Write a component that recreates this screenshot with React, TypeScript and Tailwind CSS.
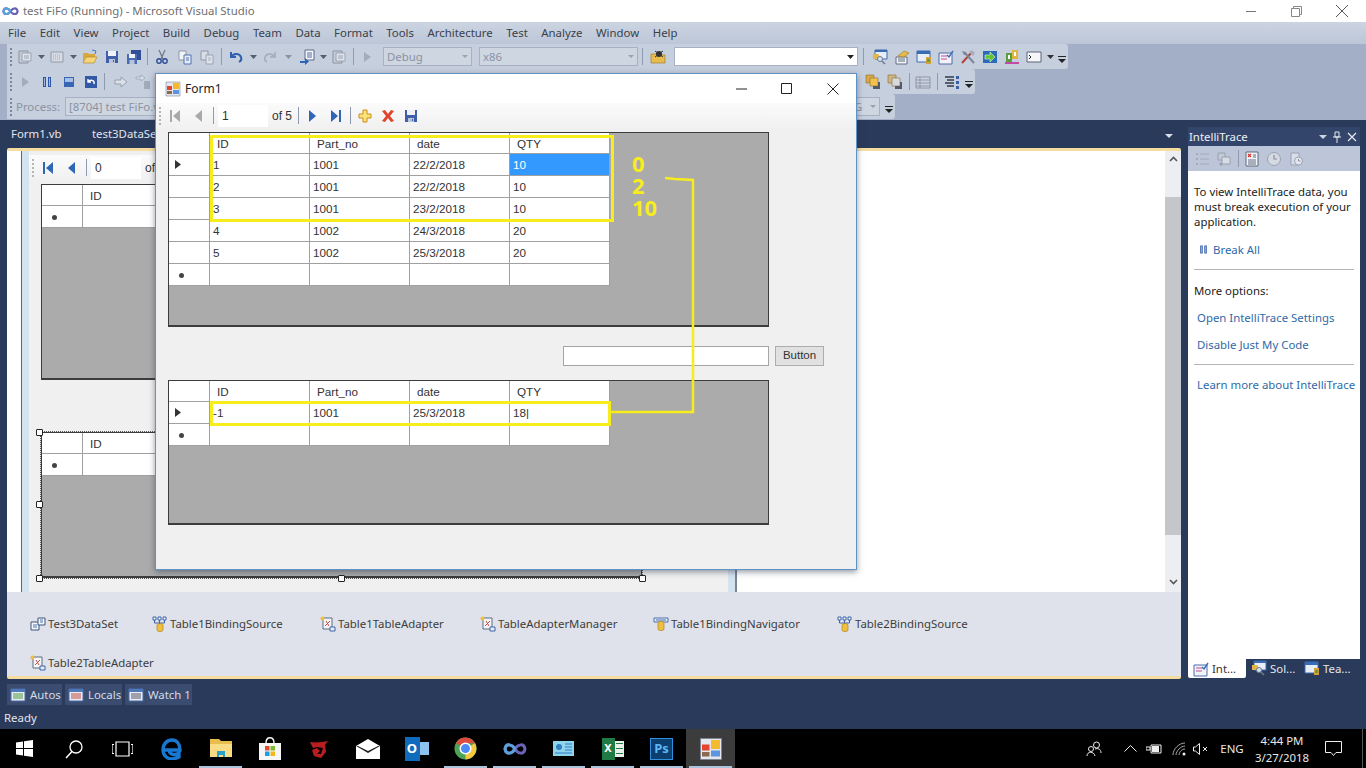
import type { ReactNode } from "react";

const Ico = ({ children, size = 16 }: { children: ReactNode; size?: number }) => (
  <svg viewBox="0 0 16 16" width={size} height={size} className="shrink-0">
    {children}
  </svg>
);

const Slot = ({ children, className = "w-[22px]" }: { children?: ReactNode; className?: string }) => (
  <div className={`flex h-full shrink-0 items-center justify-center ${className}`}>{children}</div>
);

const Grip = ({ className = "w-[7px]" }: { className?: string }) => (
  <Slot className={className}>
    <div className="flex flex-col gap-[2px]">
      {[0, 1, 2, 3, 4].map((i) => (
        <div key={i} className="h-[2px] w-[2px] bg-[#7d8698]" />
      ))}
    </div>
  </Slot>
);

const Sep = ({ className = "w-[6px]" }: { className?: string }) => (
  <Slot className={className}>
    <div className="h-[17px] w-px bg-[#8f9ab0]" />
  </Slot>
);

const Caret = ({ className = "w-[10px]", color = "#55606f" }: { className?: string; color?: string }) => (
  <Slot className={className}>
    <svg width="7" height="4" viewBox="0 0 7 4">
      <path d="M0 0h7L3.5 4z" fill={color} />
    </svg>
  </Slot>
);

const Overflow = ({ className = "w-[12px]" }: { className?: string }) => (
  <Slot className={className}>
    <svg width="8" height="8" viewBox="0 0 8 8" className="mt-[6px]">
      <path d="M0 0h8v1H0zM0 3h8L4 7z" fill="#222" />
    </svg>
  </Slot>
);

// toolbar drawings
const Folder = () => (
  <Ico>
    <path d="M1 13V4h5l1 1h6v3H4z" fill="#d9a93a" />
    <path d="M1 14l3-6h11l-3 6z" fill="#f5d67a" stroke="#b58a2a" strokeWidth=".7" />
    <path d="M10 1l4 1-1 3" fill="none" stroke="#4f77b5" />
  </Ico>
);
const Floppy = () => (
  <Ico>
    <path d="M2 2h12v12H2z" fill="#3f5fa8" />
    <path d="M4 2h8v5H4z" fill="#eef1f7" />
    <path d="M5 10h6v4H5z" fill="#b9c4da" />
    <path d="M9 11h1v2H9z" fill="#3f5fa8" />
  </Ico>
);
const SaveAll = () => (
  <Ico>
    <path d="M5 1h10v10H5z" fill="#314f96" />
    <path d="M1 5h10v10H1z" fill="#4a6ab2" />
    <path d="M3 5h6v4H3z" fill="#eef1f7" />
    <path d="M3.5 11h5v4h-5z" fill="#b9c4da" />
  </Ico>
);
const Scissors = () => (
  <Ico>
    <path d="M5 1l4 9M11 1L7 10" stroke="#6d7482" strokeWidth="1.2" fill="none" />
    <circle cx="5" cy="12" r="2.2" fill="none" stroke="#2d4f96" strokeWidth="1.4" />
    <circle cx="11" cy="12" r="2.2" fill="none" stroke="#2d4f96" strokeWidth="1.4" />
  </Ico>
);
const Docs = ({ faded = false }: { faded?: boolean }) => (
  <Ico>
    <path d="M2 2h7v9H2z" fill={faded ? "#d8dde6" : "#f2f4f8"} stroke="#8f97a8" />
    <path d="M7 6h7v9H7z" fill={faded ? "#dfe3ea" : "#e4ecf8"} stroke={faded ? "#9aa3b4" : "#5572ad"} />
    <path d="M9 9h3M9 11h3" stroke={faded ? "#aab2c0" : "#5572ad"} />
  </Ico>
);
const Grayed = () => (
  <Ico>
    <path d="M2 2h9v12H2z" fill="#c8ced9" stroke="#8a92a2" />
    <path d="M5 4h9v8H5z" fill="#dfe3ea" stroke="#9aa3b4" />
    <path d="M7 7h5M7 9h5" stroke="#9aa3b4" />
  </Ico>
);
const GrayedDots = () => (
  <Ico>
    <path d="M2 3h12v10H2z" fill="#d6dbe4" stroke="#929aaa" />
    <path d="M4 6h8M4 8h8M4 10h8" stroke="#a7aebc" strokeDasharray="1 1" />
  </Ico>
);
const Undo = ({ color = "#2f5fb0" }: { color?: string }) => (
  <Ico>
    <path d="M3 3v5h5M3.5 8C5 4.5 11 3.5 13 8c.8 2-.2 4-2 5" fill="none" stroke={color} strokeWidth="2" />
  </Ico>
);
const Redo = () => (
  <Ico>
    <path d="M13 3v5H8M12.5 8C11 4.5 5 3.5 3 8c-.8 2 .2 4 2 5" fill="none" stroke="#a3acbb" strokeWidth="1.6" />
  </Ico>
);
const NavDoc = () => (
  <Ico>
    <path d="M6 1h9v10H6z" fill="#f4f6fa" stroke="#5b6b86" />
    <path d="M8 4h5M8 6h5M8 8h5" stroke="#4d6dab" />
    <path d="M1 12h5V9l4 3.5L6 16v-2H1z" fill="#2f63b5" />
  </Ico>
);
const Tri = ({ color = "#a3acbb" }: { color?: string }) => (
  <Ico>
    <path d="M5 3l7 5-7 5z" fill={color} />
  </Ico>
);
const Spider = () => (
  <Ico>
    <path d="M1 14V5h5l1 1h8v8z" fill="#e7bb4c" stroke="#a37f28" strokeWidth=".7" />
    <circle cx="9" cy="5" r="3" fill="#333" />
    <path d="M5 2l8 6M13 2L5 8" stroke="#333" />
  </Ico>
);
const Pause = ({ size = 16 }: { size?: number }) => (
  <Ico size={size}>
    <path d="M4 3h3v10H4zM9 3h3v10H9z" fill="#2c55a5" />
    <path d="M5 4h1v8H5zM10 4h1v8h-1z" fill="#9db8e6" />
  </Ico>
);
const Stop = () => (
  <Ico>
    <path d="M3 3h10v10H3z" fill="#3866b5" />
    <path d="M4 4h8v4H4z" fill="#a7c0e8" />
  </Ico>
);
const Restart = () => (
  <Ico>
    <path d="M2 2h12v12H2z" fill="#3159a5" />
    <path d="M5 5v3h3M5.4 8C7 5 12 6 11 10" fill="none" stroke="#fff" strokeWidth="1.4" />
  </Ico>
);
const StepArrow = () => (
  <Ico>
    <path d="M2 6h6V3l6 5-6 5v-3H2z" fill="#dbe0e9" stroke="#97a0b0" />
  </Ico>
);
const StepInto = () => (
  <Ico>
    <path d="M1 3h5V1l4 3-4 3V5H1z" fill="#dbe0e9" stroke="#97a0b0" strokeWidth=".7" />
    <path d="M9 8h6M9 10h6M9 12h6M9 14h6" stroke="#7d8698" />
  </Ico>
);
const Search = () => (
  <Ico>
    <path d="M3 1h12v9H3z" fill="#e8eef8" stroke="#3a6bb5" />
    <path d="M3 1h12v2H3z" fill="#3a6bb5" />
    <path d="M1 5h5l1 1v4H1z" fill="#e3b648" />
    <circle cx="8" cy="10" r="2.5" fill="#d6e4f5" stroke="#707a8c" />
    <path d="M10 12l3 3" stroke="#707a8c" strokeWidth="1.5" />
  </Ico>
);
const Props = () => (
  <Ico>
    <path d="M2 8h11v7H2z" fill="#f3f5f9" stroke="#5e6a80" />
    <path d="M4 10h7M4 12h7" stroke="#5e6a80" />
    <path d="M4 7l6-5 5 2-5 4z" fill="#e6bb4a" stroke="#a37f28" strokeWidth=".7" />
  </Ico>
);
const Boxed = () => (
  <Ico>
    <path d="M1 2h13v11H1z" fill="#e8eef8" stroke="#3a6bb5" />
    <path d="M1 2h13v3H1z" fill="#3a6bb5" />
    <path d="M10 8h5v7h-5z" fill="#d1a23a" />
    <path d="M11 10h3v3h-3z" fill="#6c9b42" />
  </Ico>
);
const Checklist = () => (
  <Ico>
    <path d="M1 4h13v11H1z" fill="#f1f3f8" stroke="#4d6dab" />
    <path d="M3 7h6M3 10h6" stroke="#c34a9a" />
    <path d="M9 6l2 2 4-6" fill="none" stroke="#3a6bb5" strokeWidth="1.4" />
  </Ico>
);
const RedList = () => (
  <Ico>
    <path d="M2 1h12v14H2z" fill="#f4f5f8" stroke="#5e6a80" />
    <path d="M4 3l3 3M7 3L4 6" stroke="#d3352a" strokeWidth="1.3" />
    <path d="M9 4h3M9 6h3M4 9h8M4 11h8M4 13h8" stroke="#5e6a80" />
  </Ico>
);
const ClockGrey = () => (
  <Ico>
    <circle cx="8" cy="8" r="6.5" fill="#d4d9e2" stroke="#9aa3b4" />
    <path d="M8 4v4h3" fill="none" stroke="#8a92a2" strokeWidth="1.2" />
  </Ico>
);
const ClockDoc = () => (
  <Ico>
    <path d="M3 2h8v12H3z" fill="#d9dde5" stroke="#9aa3b4" />
    <circle cx="10.500" cy="10" r="4" fill="#e4e7ed" stroke="#9aa3b4" />
    <path d="M10.500 8v2h2" fill="none" stroke="#8a92a2" />
  </Ico>
);
const NumList = () => (
  <Ico>
    <path d="M6 3h9M6 8h9M6 13h9" stroke="#a3acbb" strokeWidth="1.2" />
    <path d="M2 2h2v2H2zM2 7h2v2H2zM2 12h2v2H2z" fill="#a3acbb" />
  </Ico>
);
const Tools = () => (
  <Ico>
    <path d="M2 14L12 3" stroke="#b5423a" strokeWidth="2" />
    <path d="M14 14L5 4" stroke="#7d8698" strokeWidth="2" />
    <path d="M9 3l3-2 3 3-2 3z" fill="#a7aebc" />
    <path d="M2 2l4 1 1 3-3 0z" fill="#7d8698" />
  </Ico>
);
const GreenArrow = () => (
  <Ico>
    <path d="M1 2h14v12H1z" fill="#2a6cb8" />
    <path d="M3 6h5V3l5 5-5 5v-3H3z" fill="#62c434" stroke="#e8f6dd" strokeWidth=".6" />
  </Ico>
);
const Blocks = () => (
  <Ico>
    <path d="M1 13h14v2H1z" fill="#c24ba6" />
    <path d="M2 4h6v9H2z" fill="#5c9e3d" />
    <path d="M8 1h6v9H8z" fill="#e2b63e" />
    <path d="M4 6h2v4H4zM10 3h2v4h-2z" fill="#fff" />
  </Ico>
);
const Terminal = () => (
  <Ico>
    <path d="M1 3h14v10H1z" fill="#f4f6fa" stroke="#5a6478" />
    <path d="M3 6l2 2-2 2" fill="none" stroke="#222" />
  </Ico>
);
const Stack = ({ muted = false }: { muted?: boolean }) => (
  <Ico>
    <path d="M1 1h8v8H1z" fill={muted ? "#cfb684" : "#d8a84a"} stroke="#8a6d2c" strokeWidth=".6" />
    <path d="M5 4h8v8H5z" fill={muted ? "#d8d9dc" : "#f2c14d"} stroke="#8a6d2c" strokeWidth=".6" />
    <path d="M13 8h2v7H8v-3h5z" fill="#555b66" />
  </Ico>
);
const GreyStack = () => (
  <Ico>
    <path d="M2 2h7v7H2z" fill="#c4cad5" stroke="#98a0b0" />
    <path d="M6 6h8v7H6z" fill="#d8dce4" stroke="#98a0b0" />
    <path d="M3 12h3v3l-2-1z" fill="#98a0b0" />
  </Ico>
);
const ListLines = () => (
  <Ico>
    <path d="M1 3h14v11H1z" fill="#cdd3de" stroke="#8f97a8" />
    <path d="M1 6h14M1 9h14M1 12h14M5 3v11" stroke="#8f97a8" />
  </Ico>
);
const ListNum = () => (
  <Ico>
    <path d="M1 3h9M3 6h7M1 9h9M3 12h7" stroke="#333a48" strokeWidth="1.4" />
    <path d="M12 2h3v3h-3zM12 7h3v3h-3zM12 12h3v3h-3z" fill="#3a5fa8" />
  </Ico>
);
const DebugWin = ({ accent }: { accent: string }) => (
  <Ico>
    <path d="M1 2h14v12H1z" fill="#e9edf4" stroke="#4d6dab" />
    <path d="M1 2h14v3H1z" fill="#4d79b8" />
    <path d="M3 7h10M3 9h10M3 11h10" stroke={accent} />
  </Ico>
);

// winforms binding navigator drawings
const NavFirst = ({ color }: { color: string }) => (
  <Ico>
    <path d="M3 2h2v12H3zM13 2v12L6 8z" fill={color} />
  </Ico>
);
const NavPrev = ({ color }: { color: string }) => (
  <Ico>
    <path d="M11 2v12L4 8z" fill={color} />
  </Ico>
);
const NavNext = () => (
  <Ico>
    <path d="M5 2v12l7-6z" fill="#2f66b5" />
  </Ico>
);
const NavLast = () => (
  <Ico>
    <path d="M3 2v12l7-6zM11 2h2v12h-2z" fill="#2f66b5" />
  </Ico>
);
const AddNew = () => (
  <Ico>
    <path d="M6 2h4v4h4v4h-4v4H6v-4H2V6h4z" fill="#fbe27a" stroke="#c98f12" />
  </Ico>
);
const Delete = () => (
  <Ico>
    <path d="M2 3l3-1 3 4 3-4 3 1-4 5 4 5-3 1-3-4-3 4-3-1 4-5z" fill="#e2432e" />
  </Ico>
);
const FormIcon = ({ size = 16 }: { size?: number }) => (
  <Ico size={size}>
    <path d="M1 1h14v14H1z" fill="#e4e7ee" stroke="#7b8494" strokeWidth=".6" />
    <path d="M8 2h6v6H8z" fill="#f3b92f" />
    <path d="M8 9h6v4H8z" fill="#5d94dd" />
    <path d="M2 5h5v4H2z" fill="#e2452f" />
    <path d="M2 10h5v3H2z" fill="#8c6a50" />
  </Ico>
);

// component tray drawings
const DataSetIcon = () => (
  <Ico>
    <path d="M1 6h8v8H1z" fill="#f4f6fa" stroke="#40557d" />
    <path d="M8 2h7v7H8z" fill="#f4f6fa" stroke="#40557d" />
    <path d="M3 9h4M3 11h4M10 4h3M10 6h3" stroke="#4d76b8" />
  </Ico>
);
const BindingIcon = () => (
  <Ico>
    <path d="M1 1h3v3H1zM6 1h3v3H6zM11 1h3v3h-3z" fill="#f4f6fa" stroke="#3f65a8" />
    <path d="M2.5 4v3h10V4M7.5 4v4" stroke="#3f65a8" fill="none" />
    <path d="M5 9c0-2 6-2 6 0v5c0 2-6 2-6 0z" fill="#f0bf3e" stroke="#a07a1d" strokeWidth=".6" />
  </Ico>
);
const AdapterIcon = () => (
  <Ico>
    <path d="M3 2h9v11H3z" fill="#f4f6fa" stroke="#5d6a82" />
    <circle cx="2.5" cy="2.5" r="2" fill="#f0bf3e" />
    <path d="M5 10l5-5M6 5l3 5" stroke="#c2493f" />
    <path d="M10 11h5v4h-5z" fill="#e8eef8" stroke="#3f65a8" />
  </Ico>
);
const NavigatorIcon = () => (
  <Ico>
    <path d="M1 2h14v4H1z" fill="#e8eef8" stroke="#4d6dab" />
    <path d="M3 4h10" stroke="#4d6dab" />
    <path d="M5 7c0-2 6-2 6 0v6c0 2-6 2-6 0z" fill="#f0bf3e" stroke="#a07a1d" strokeWidth=".6" />
  </Ico>
);

// taskbar drawings
const WinLogo = () => (
  <svg width="17" height="17" viewBox="0 0 17 17">
    <path d="M0 2.4l7-1v6.6H0zM8 1.3L17 0v8H8zM0 9h7v6.6l-7-1zM8 9h9v8l-9-1.3z" fill="#fff" />
  </svg>
);
const Edge = () => (
  <svg width="22" height="22" viewBox="0 0 22 22">
    <path d="M3 12h16c0-6-3-10-8-10S2 6 2 12c0 6 5 9 9 9 3 0 5-1 7-2v-4c-3 2-9 3-10-3" fill="none" stroke="#1777d1" strokeWidth="3.4" />
  </svg>
);
const ExplorerIcon = () => (
  <svg width="22" height="20" viewBox="0 0 22 20">
    <path d="M0 0h9l2 2h11v16H0z" fill="#e9bd4d" />
    <path d="M0 5h22v13H0z" fill="#f9dc84" />
    <path d="M7 12h8v6h-2v-2H9v2H7z" fill="#2a9fc9" />
  </svg>
);
const StoreIcon = () => (
  <svg width="24" height="24" viewBox="0 0 24 24">
    <path d="M1 6h22v17H1z" fill="#f6f6f6" />
    <path d="M8 6c0-7 8-7 8 0" fill="none" stroke="#f6f6f6" strokeWidth="1.4" />
    <path d="M7 9h4.500v4.500H7z" fill="#e2492f" />
    <path d="M12.500 9H17v4.500h-4.500z" fill="#7db82e" />
    <path d="M7 14.500h4.500V19H7z" fill="#1d9de2" />
    <path d="M12.500 14.500H17V19h-4.500z" fill="#f3b81f" />
  </svg>
);
const Garena = () => (
  <svg width="20" height="20" viewBox="0 0 20 20">
    <path d="M1 3c5 1 13 0 18-1l-3 4 1 7-5 6-7-2-2-6 5-2 3 3-3 3 4 0 2-6-6-1-4 1z" fill="#b91d20" />
  </svg>
);
const MailIcon = () => (
  <svg width="24" height="20" viewBox="0 0 24 20">
    <path d="M0 7l12-7 12 7v13H0z" fill="#fff" />
    <path d="M0 7l12 7 12-7-2 0-10 5L2 7z" fill="#222" />
  </svg>
);
const OutlookIcon = () => (
  <div className="relative flex h-[24px] w-[24px] items-center">
    <div className="absolute right-0 h-[13px] w-[13px] bg-[#8ec1ee]" />
    <div className="relative flex h-[24px] w-[15px] items-center justify-center bg-[#0f6cbd] text-[13px] font-bold text-white">O</div>
  </div>
);
const ChromeIcon = () => (
  <svg width="23" height="23" viewBox="0 0 24 24">
    <circle cx="12" cy="12" r="11.500" fill="#4aa356" />
    <path d="M12 12L2 6.200A11.500 11.500 0 0 1 22 6.500H12z" fill="#dd4b3e" />
    <path d="M12 12l10-5.500A11.500 11.500 0 0 1 12 23.500z" fill="#f6c83f" />
    <circle cx="12" cy="12" r="5.500" fill="#4c8bf5" stroke="#fff" strokeWidth="1.6" />
  </svg>
);
const Infinity2 = ({ w = 24 }: { w?: number }) => (
  <svg width={w} height={w / 2} viewBox="0 0 24 12">
    <path d="M12 6C9 1 3 0 2 6c1 6 7 5 10 0 3-5 9-6 10 0-1 6-7 5-10 0z" fill="none" stroke="#6a63b8" strokeWidth="3" />
    <path d="M12 6C9 1 3 0 2 6c1 6 7 5 10 0" fill="none" stroke="#5aa1d8" strokeWidth="3" />
  </svg>
);
const PanelBlue = () => (
  <svg width="21" height="15" viewBox="0 0 21 15">
    <path d="M0 0h21v15H0z" fill="#8fd3ef" />
    <circle cx="6" cy="6" r="3" fill="#2f7fc0" />
    <path d="M12 3h7M12 6h7M12 9h7M2 12h17" stroke="#2f7fc0" />
  </svg>
);
const ExcelIcon = () => (
  <div className="flex h-[22px] w-[22px] items-center">
    <div className="flex h-[22px] w-[13px] items-center justify-center bg-[#1f7a45] text-[11px] font-bold text-white">X</div>
    <div className="flex h-[16px] w-[9px] flex-col justify-around bg-[#e9f1ea] px-px">
      <div className="h-px bg-[#1f7a45]" />
      <div className="h-px bg-[#1f7a45]" />
      <div className="h-px bg-[#1f7a45]" />
    </div>
  </div>
);
const PsIcon = () => (
  <div className="flex h-[22px] w-[23px] items-center justify-center border border-[#2f8fe0] bg-[#0d3f6e] text-[13px] font-bold leading-none text-[#5cb8f5]">Ps</div>
);

const Grid = ({ rows, height, current = -1, selected = false }: { rows: string[][]; height: string; current?: number; selected?: boolean }) => (
  <div className={`w-[601px] overflow-hidden border border-[#3c3c3c] border-b-2 bg-[#ababab] font-['Liberation_Sans',sans-serif] text-[11.7px] text-[#333] ${height}`}>
    <div className="flex h-[21px] w-[441px] bg-white">
      {["", "ID", "Part_no", "date", "QTY"].map((h, i) => (
        <div key={i} className={`flex items-center border-r border-b border-[#a0a0a0] pt-[2px] pl-[7px] ${i === 0 ? "w-[41px]" : "w-[100px]"}`}>{h}</div>
      ))}
    </div>
    {[...rows, ["", "", "", ""]].map((r, ri) => (
      <div key={ri} className="flex h-[22px] w-[441px] bg-white">
        <div className="flex w-[41px] items-center border-r border-b border-[#a0a0a0]">
          {ri === current && (
            <svg width="6" height="9" viewBox="0 0 6 9" className="ml-[6px]">
              <path d="M0 0l6 4.500L0 9z" fill="#333" />
            </svg>
          )}
          {ri === rows.length && <div className="mt-[2px] ml-[10px] h-[5px] w-[5px] rounded-full bg-[#444]" />}
        </div>
        {r.map((c, ci) => (
          <div
            key={ci}
            className={`flex w-[100px] items-center border-r border-b border-[#a0a0a0] pl-[3px] ${
              selected && ri === 0 && ci === 3 ? "bg-[#3399ff] text-white" : ""
            }`}
          >
            {c}
          </div>
        ))}
      </div>
    ))}
  </div>
);

const Nav = ({ value, blue = false }: { value: string; blue?: boolean }) => (
  <div className="flex h-[27px] items-center bg-gradient-to-b from-[#fbfbfb] to-[#f0f0f0] pb-[2px] font-['Liberation_Sans',sans-serif] text-[12px] text-[#333]">
    <Slot className="w-[8px]">
      <div className="flex flex-col gap-[2px]">
        {[0, 1, 2, 3, 4].map((i) => (
          <div key={i} className="h-[2px] w-[2px] bg-[#b5b5b5]" />
        ))}
      </div>
    </Slot>
    <Slot><NavFirst color={blue ? "#2f66b5" : "#a9a9a9"} /></Slot>
    <Slot className="ml-[2px] w-[22px]"><NavPrev color={blue ? "#2f66b5" : "#a9a9a9"} /></Slot>
    <Sep />
    <div className="ml-[2px] flex h-[22px] w-[50px] items-center bg-white pl-[4px]">{value}</div>
    <div className="w-[27px] pl-[4px]">of 5</div>
    <Sep className="w-[6px]" />
    <Slot><NavNext /></Slot>
    <Slot className="ml-[2px] w-[22px]"><NavLast /></Slot>
    <Sep className="w-[7px]" />
    <Slot><AddNew /></Slot>
    <Slot className="ml-px w-[22px]"><Delete /></Slot>
    <Slot className="ml-px w-[22px]"><Floppy /></Slot>
  </div>
);

const Handle = ({ className }: { className: string }) => (
  <div className={`absolute h-[7px] w-[7px] rounded-[1px] border border-[#222] bg-white ${className}`} />
);

const records = [
  ["1", "1001", "22/2/2018", "10"],
  ["2", "1001", "22/2/2018", "10"],
  ["3", "1001", "23/2/2018", "10"],
  ["4", "1002", "24/3/2018", "20"],
  ["5", "1002", "25/3/2018", "20"],
];

const menu = ["File", "Edit", "View", "Project", "Build", "Debug", "Team", "Data", "Format", "Tools", "Architecture", "Test", "Analyze", "Window", "Help"];

const tray = [
  { name: "Test3DataSet", icon: <DataSetIcon />, w: "w-[122px]" },
  { name: "Table1BindingSource", icon: <BindingIcon />, w: "w-[168px]" },
  { name: "Table1TableAdapter", icon: <AdapterIcon />, w: "w-[160px]" },
  { name: "TableAdapterManager", icon: <AdapterIcon />, w: "w-[173px]" },
  { name: "Table1BindingNavigator", icon: <NavigatorIcon />, w: "w-[184px]" },
  { name: "Table2BindingSource", icon: <BindingIcon />, w: "w-[300px]" },
  { name: "Table2TableAdapter", icon: <AdapterIcon />, w: "w-[160px]" },
];

const taskbar = [
  { icon: <WinLogo />, on: false },
  {
    icon: (
      <svg width="20" height="20" viewBox="0 0 20 20">
        <circle cx="12" cy="8" r="6" fill="none" stroke="#fff" strokeWidth="1.3" />
        <path d="M8 12.500L2 19" stroke="#fff" strokeWidth="1.5" />
      </svg>
    ),
    on: false,
  },
  {
    icon: (
      <svg width="21" height="16" viewBox="0 0 21 16">
        <path d="M4 1h13v14H4zM0 3.500h2M0 3.500v9M0 12.500h2M21 3.500h-2M21 3.500v9M21 12.500h-2" fill="none" stroke="#fff" strokeWidth="1.2" />
      </svg>
    ),
    on: false,
  },
  { icon: <Edge />, on: false },
  { icon: <ExplorerIcon />, on: true },
  { icon: <StoreIcon />, on: false },
  { icon: <Garena />, on: false },
  { icon: <MailIcon />, on: false },
  { icon: <OutlookIcon />, on: false },
  { icon: <ChromeIcon />, on: true },
  { icon: <Infinity2 />, on: true },
  { icon: <PanelBlue />, on: true },
  { icon: <ExcelIcon />, on: true },
  { icon: <PsIcon />, on: true },
  { icon: <FormIcon size={24} />, on: true, active: true },
];

export default function App() {
  return (
    <div className="relative flex h-[768px] w-[1366px] flex-col overflow-hidden bg-[#2a3a5a] font-['Noto_Sans',sans-serif] text-[11.4px] text-[#333]">
      {/* title bar */}
      <div className="flex h-[22px] shrink-0 items-center bg-white pl-[2px] text-[#6f6f6f]">
        <Infinity2 w={17} />
        <span className="ml-[4px]">test FiFo (Running) - Microsoft Visual Studio</span>
        <div className="ml-auto flex items-center">
          <svg width="10" height="10" viewBox="0 0 10 10" className="mr-[35px]"><path d="M0 5.500h10" stroke="#777" /></svg>
          <svg width="11" height="11" viewBox="0 0 11 11" className="mr-[34px]"><path d="M.5 2.500h8v8h-8zM2.500 2.500v-2h8v8h-2" fill="none" stroke="#888" /></svg>
          <svg width="12" height="12" viewBox="0 0 12 12" className="mr-[18px]"><path d="M0 0l12 12M12 0L0 12" stroke="#555" /></svg>
        </div>
      </div>

      {/* menu */}
      <div className="flex h-[22px] shrink-0 items-center gap-[13.500px] bg-gradient-to-b from-[#ccd4e1] to-[#bcc6d7] pl-[8px] text-[#3a3f4a]">
        {menu.map((m) => (
          <span key={m}>{m}</span>
        ))}
      </div>

      {/* toolbars */}
      <div className="flex h-[76px] shrink-0 flex-col bg-[#a2afc6] pl-[7px] pb-[1px]">
        <div className="flex h-[25px] w-[1061px] items-center rounded-r-[3px] bg-[#c6cfdd] text-[#8b93a2]">
          <Grip />
          <Slot><Grayed /></Slot>
          <Caret />
          <Slot><GrayedDots /></Slot>
          <Caret className="w-[11px]" />
          <Slot><Folder /></Slot>
          <Slot><Floppy /></Slot>
          <Slot><SaveAll /></Slot>
          <Sep className="w-[5px]" />
          <Slot className="w-[23px]"><Scissors /></Slot>
          <Slot className="w-[23px]"><Docs /></Slot>
          <Slot><Docs faded /></Slot>
          <Sep className="w-[7px]" />
          <Slot><Undo /></Slot>
          <Caret className="w-[12px]" />
          <Slot><Redo /></Slot>
          <Caret className="w-[15px]" color="#8a93a2" />
          <Slot><NavDoc /></Slot>
          <Caret />
          <Slot><Grayed /></Slot>
          <Sep />
          <Slot><Tri /></Slot>
          <div className="ml-[5px] flex h-[19px] w-[89px] items-center justify-between border border-[#a7b1c3] bg-[#ced6e2] px-[3px]">
            Debug
            <svg width="6" height="3" viewBox="0 0 6 3"><path d="M0 0h6L3 3z" fill="#9aa2b0" /></svg>
          </div>
          <div className="ml-[7px] flex h-[19px] w-[159px] items-center justify-between border border-[#a7b1c3] bg-[#ced6e2] px-[3px]">
            x86
            <svg width="6" height="3" viewBox="0 0 6 3"><path d="M0 0h6L3 3z" fill="#9aa2b0" /></svg>
          </div>
          <Sep className="w-[9px]" />
          <Slot><Spider /></Slot>
          <div className="ml-[5px] flex h-[19px] w-[184px] items-center justify-end border border-[#a7b1c3] bg-white pr-[3px]">
            <svg width="7" height="4" viewBox="0 0 7 4"><path d="M0 0h7L3.500 4z" fill="#222" /></svg>
          </div>
          <Sep className="w-[11px]" />
          <Slot><Search /></Slot>
          <Slot><Props /></Slot>
          <Slot><Boxed /></Slot>
          <Slot><Checklist /></Slot>
          <Slot><Tools /></Slot>
          <Slot><GreenArrow /></Slot>
          <Slot><Blocks /></Slot>
          <Slot><Terminal /></Slot>
          <Caret className="w-[11px]" color="#333" />
          <Overflow />
        </div>
        <div className="flex h-[25px] w-[968px] items-center rounded-r-[3px] bg-[#c6cfdd]">
          <Grip />
          <Slot className="w-[22px]"><Tri /></Slot>
          <Slot className="w-[21px]"><Pause /></Slot>
          <Slot className="w-[23px]"><Stop /></Slot>
          <Slot><Restart /></Slot>
          <Sep className="w-[5px]" />
          <Slot className="ml-[3px] w-[22px]"><StepArrow /></Slot>
          <Slot><StepInto /></Slot>
          <div className="w-[721px]" />
          <Slot><Stack /></Slot>
          <Slot><Stack muted /></Slot>
          <Sep />
          <Slot><ListLines /></Slot>
          <Sep className="w-[7px]" />
          <Slot><ListNum /></Slot>
          <Overflow className="w-[12px]" />
        </div>
        <div className="flex h-[25px] w-[888px] items-center rounded-r-[3px] bg-[#c6cfdd] text-[#8b93a2]">
          <Grip />
          <span className="ml-[2px] w-[49px]">Process:</span>
          <div className="flex h-[19px] w-[120px] items-center border border-[#a7b1c3] bg-[#ced6e2] pl-[3px] whitespace-nowrap">[8704] test FiFo.vshost</div>
          <div className="ml-auto flex h-[19px] w-[30px] items-center justify-between border border-[#a7b1c3] bg-[#ced6e2] px-[3px]">
            G
            <svg width="6" height="3" viewBox="0 0 6 3"><path d="M0 0h6L3 3z" fill="#9aa2b0" /></svg>
          </div>
          <Overflow className="ml-[2px] w-[13px]" />
        </div>
      </div>

      {/* main area */}
      <div className="flex h-[564px] shrink-0">
        <div className="flex w-[1181px] shrink-0 flex-col pb-[5px]">
          <div className="flex h-[28px] shrink-0 items-center pr-[7px] pl-[11px] text-[#e2e6ee]">
            <span className="w-[81px]">Form1.vb</span>
            <span>test3DataSet.xsd</span>
            <svg width="8" height="4" viewBox="0 0 8 4" className="mt-[3px] ml-auto mr-px"><path d="M0 0h8L4 4z" fill="#d8deea" /></svg>
          </div>
          <div className="ml-[7px] flex flex-1 flex-col overflow-hidden rounded-[2px] border-y-[3px] border-[#f6dd9f] bg-white">
            <div className="flex h-[441px] shrink-0">
              <div className="w-[14px] shrink-0 bg-white" />
              <div className="w-px shrink-0 bg-[#5f6673]" />
              <div className="w-[7px] shrink-0 bg-[#d5e2f0]" />

              {/* form in the designer, behind the running one */}
              <div className="w-[699px] shrink-0 bg-[#f0f0f0] pt-[4px]">
                <Nav value="0" blue />
                <div className="mt-[2px] ml-[12px]">
                  <Grid rows={[]} height="h-[196px]" />
                </div>
                <div className="relative mt-[52px] ml-[12px] w-[601px]">
                  <Grid rows={[]} height="h-[146px]" />
                  <div className="absolute -inset-[1px] border border-dotted border-[#555]" />
                  <Handle className="-top-[3px] -left-[5px]" />
                  <Handle className="top-[69px] -left-[5px]" />
                  <Handle className="-bottom-[4px] -left-[5px]" />
                  <Handle className="-bottom-[4px] left-[297px]" />
                  <Handle className="-right-[4px] -bottom-[4px]" />
                </div>
              </div>

              <div className="w-[7px] shrink-0 bg-[#d5e2f0]" />
              <div className="w-[2px] shrink-0 bg-[#7a8494]" />
              <div className="flex-1 bg-white" />
              <div className="flex w-[16px] shrink-0 flex-col items-center bg-[#eceef1]">
                <svg width="9" height="6" viewBox="0 0 9 6" className="mt-[5px]"><path d="M1 5l3.500-3.500L8 5" fill="none" stroke="#555" strokeWidth="1.6" /></svg>
                <div className="mt-[35px] h-[338px] w-full bg-[#c4c6ca]" />
                <svg width="9" height="6" viewBox="0 0 9 6" className="mt-[44px]"><path d="M1 1l3.500 3.500L8 1" fill="none" stroke="#555" strokeWidth="1.6" /></svg>
              </div>
            </div>

            {/* component tray */}
            <div className="flex flex-1 flex-wrap content-start bg-[#dfe2ea] pt-[24px] pl-[23px] text-[#3d3d3d]">
              {tray.map((t) => (
                <div key={t.name} className={`mb-[23px] flex h-[16px] items-center gap-[2px] ${t.w}`}>
                  {t.icon}
                  <span>{t.name}</span>
                </div>
              ))}
            </div>
          </div>
        </div>

        {/* intellitrace tool window */}
        <div className="flex w-[185px] shrink-0 flex-col pt-[7px] pr-[6px] pb-[6px] pl-[7px]">
          <div className="flex h-[19px] shrink-0 items-center justify-between bg-[#33456a] pr-[3px] pl-[1px] text-[#eef1f6]">
            <span>IntelliTrace</span>
            <div className="flex items-center gap-[5px]">
              <svg width="8" height="4" viewBox="0 0 8 4"><path d="M0 0h8L4 4z" fill="#cdd5e3" /></svg>
              <svg width="10" height="12" viewBox="0 0 10 12"><path d="M3 1h4v5H3zM1 6h8M5 6v6" fill="none" stroke="#e5e9f0" /></svg>
              <svg width="10" height="10" viewBox="0 0 10 10"><path d="M1 1l8 8M9 1L1 9" stroke="#e5e9f0" strokeWidth="1.200" /></svg>
            </div>
          </div>
          <div className="flex h-[25px] shrink-0 items-center bg-[#bcc6d8] pl-[3px]">
            <Slot><NumList /></Slot>
            <Slot><GreyStack /></Slot>
            <Sep />
            <Slot><RedList /></Slot>
            <Slot><ClockGrey /></Slot>
            <Slot><ClockDoc /></Slot>
          </div>
          <div className="flex-1 bg-white px-[6px] pt-[13px] text-[#222]">
            <p className="leading-[15px]">To view IntelliTrace data, you must break execution of your application.</p>
            <div className="mt-[13px] flex h-[15px] items-center pl-[3px] text-[#2f6aa8]">
              <Pause size={13} />
              <span className="ml-[3px]">Break All</span>
            </div>
            <div className="mt-[12px] h-px bg-[#b5b5b5]" />
            <p className="mt-[13px] leading-[15px]">More options:</p>
            <div className="mt-[12px] flex flex-col gap-[12px] pl-[3px] leading-[15px] text-[#2f6aa8]">
              <span>Open IntelliTrace Settings</span>
              <span>Disable Just My Code</span>
            </div>
            <div className="mt-[12px] h-px bg-[#b5b5b5]" />
            <p className="mt-[12px] pl-[3px] leading-[15px] whitespace-nowrap text-[#2f6aa8]">Learn more about IntelliTrace</p>
          </div>
          <div className="flex h-[19px] shrink-0 items-center text-[#e4e8ef]">
            <div className="flex h-full w-[58px] items-center gap-[3px] rounded-b-[2px] bg-white pl-[5px] text-[#333]"><Checklist />Int...</div>
            <div className="flex w-[55px] items-center gap-[3px] pl-[5px]"><Search />Sol...</div>
            <div className="flex items-center gap-[3px] pl-[3px]"><Boxed />Tea...</div>
          </div>
        </div>
      </div>

      {/* debug tabs + status bar */}
      <div className="flex h-[22px] shrink-0 items-start gap-[3px] pl-[7px] whitespace-nowrap text-[#d5dbe6]">
        <div className="flex h-[21px] w-[55px] items-center gap-[4px] bg-[#3a4d70] pl-[3px]"><DebugWin accent="#4e9a3c" />Autos</div>
        <div className="flex h-[21px] w-[57px] items-center gap-[4px] bg-[#3a4d70] pl-[3px]"><DebugWin accent="#c2493f" />Locals</div>
        <div className="flex h-[21px] w-[67px] items-center gap-[4px] bg-[#3a4d70] pl-[3px]"><DebugWin accent="#556" />Watch 1</div>
      </div>
      <div className="flex h-[23px] shrink-0 items-center pl-[4px] text-[#e4e7ee]">Ready</div>

      {/* taskbar */}
      <div className="flex h-[39px] shrink-0 items-center bg-black text-[#e8e8e8]">
        {taskbar.map((t, i) => (
          <div key={i} className={`relative flex h-full w-[49px] items-center justify-center ${t.active ? "bg-[#3c3c3c]" : ""}`}>
            {t.icon}
            {t.on && <div className="absolute inset-x-[3px] bottom-0 h-[2px] bg-[#a9c4dc]" />}
          </div>
        ))}
        <div className="ml-auto flex h-full items-center">
          <svg width="18" height="18" viewBox="0 0 18 18" className="mr-[21px]">
            <circle cx="11.500" cy="5" r="3" fill="none" stroke="#eee" />
            <circle cx="6" cy="9" r="2.500" fill="none" stroke="#eee" />
            <path d="M2 16c0-5 7-5 8 0M10 9c3-1 6 0 6 4" fill="none" stroke="#eee" />
          </svg>
          <svg width="13" height="7" viewBox="0 0 13 7" className="mr-[9px]"><path d="M.5 6.500l6-6 6 6" fill="none" stroke="#eee" /></svg>
          <svg width="16" height="10" viewBox="0 0 16 10" className="mr-[10px]">
            <path d="M5 1h10v8H5zM0 3h4v3H0z" fill="none" stroke="#eee" />
            <path d="M6 2h7v6H6z" fill="#eee" />
          </svg>
          <svg width="14" height="14" viewBox="0 0 14 14" className="mr-[7px]">
            <path d="M1 13C1 7 7 1 13 1M4 13c0-4 5-9 9-9M7 13c0-3 3-6 6-6" fill="none" stroke="#aaa" />
            <circle cx="12" cy="12" r="1.500" fill="#eee" />
          </svg>
          <svg width="15" height="12" viewBox="0 0 15 12" className="mr-[11px]">
            <path d="M.5 4h2l4-3.500v11l-4-3.500h-2zM10 4l4 4M14 4l-4 4" fill="none" stroke="#eee" />
          </svg>
          <span className="w-[26px] whitespace-nowrap text-center">ENG</span>
          <div className="ml-[9px] flex w-[56px] flex-col items-center whitespace-nowrap leading-[17px]">
            <span>4:44 PM</span>
            <span>3/27/2018</span>
          </div>
          <svg width="17" height="16" viewBox="0 0 17 16" className="mr-[20px] ml-[15px]">
            <path d="M.5.500h16v11H11l-2.500 3-2.500-3H.5z" fill="none" stroke="#eee" />
          </svg>
          <div className="h-full w-[4px] border-l border-[#555]" />
        </div>
      </div>

      {/* the running form floats over the designer */}
      <div className="absolute top-[73px] left-[155px] h-[497px] w-[702px] border border-[#5f93c4] bg-[#f0f0f0] shadow-[0_2px_6px_rgba(40,50,70,0.5)]">
        <div className="flex h-[29px] items-center bg-white pl-[9px] text-[12px] text-[#222]">
          <FormIcon />
          <span className="ml-[4px]">Form1</span>
          <div className="ml-auto flex items-center">
            <svg width="11" height="2" viewBox="0 0 11 2" className="mr-[34px]"><path d="M0 1h11" stroke="#222" /></svg>
            <svg width="11" height="11" viewBox="0 0 11 11" className="mr-[35px]"><path d="M.5.500h10v10H.5z" fill="none" stroke="#222" /></svg>
            <svg width="12" height="12" viewBox="0 0 12 12" className="mr-[17px]"><path d="M.5.500l11 11M11.500.500l-11 11" stroke="#222" /></svg>
          </div>
        </div>
        <Nav value="1" />
        <div className="ml-[12px]">
          <div className="mt-[2px]">
            <Grid rows={records} height="h-[195px]" current={0} selected />
          </div>
          <div className="mt-[19px] flex h-[20px] items-stretch pl-[395px]">
            <div className="w-[206px] border border-[#a5a5a5] bg-white" />
            <div className="ml-[6px] flex w-[49px] items-center justify-center border border-[#adadad] bg-[#e1e1e1] font-['Liberation_Sans',sans-serif] text-[11.500px]">Button</div>
          </div>
          <div className="mt-[14px]">
            <Grid rows={[["-1", "1001", "25/3/2018", "18|"]]} height="h-[145px]" current={0} />
          </div>
        </div>
      </div>

      {/* yellow marks drawn over the screenshot */}
      <div className="absolute top-[135px] left-[210px] h-[87px] w-[404px] border-[3px] border-[#f7ec1c]" />
      <div className="absolute top-[401px] left-[210px] h-[25px] w-[401px] border-[3px] border-[#f7ec1c]" />
      <svg width="100" height="260" viewBox="0 0 100 260" className="absolute top-[170px] left-[600px]">
        <path d="M65 8l10 1 18 1v232H10" fill="none" stroke="#f7ec1c" strokeWidth="2.500" />
      </svg>
      <div className="absolute top-[152px] left-[632px] flex flex-col text-[22px] font-bold leading-[22px] text-[#f7ec1c]">
        <span>0</span>
        <span>2</span>
        <span>10</span>
      </div>
    </div>
  );
}
